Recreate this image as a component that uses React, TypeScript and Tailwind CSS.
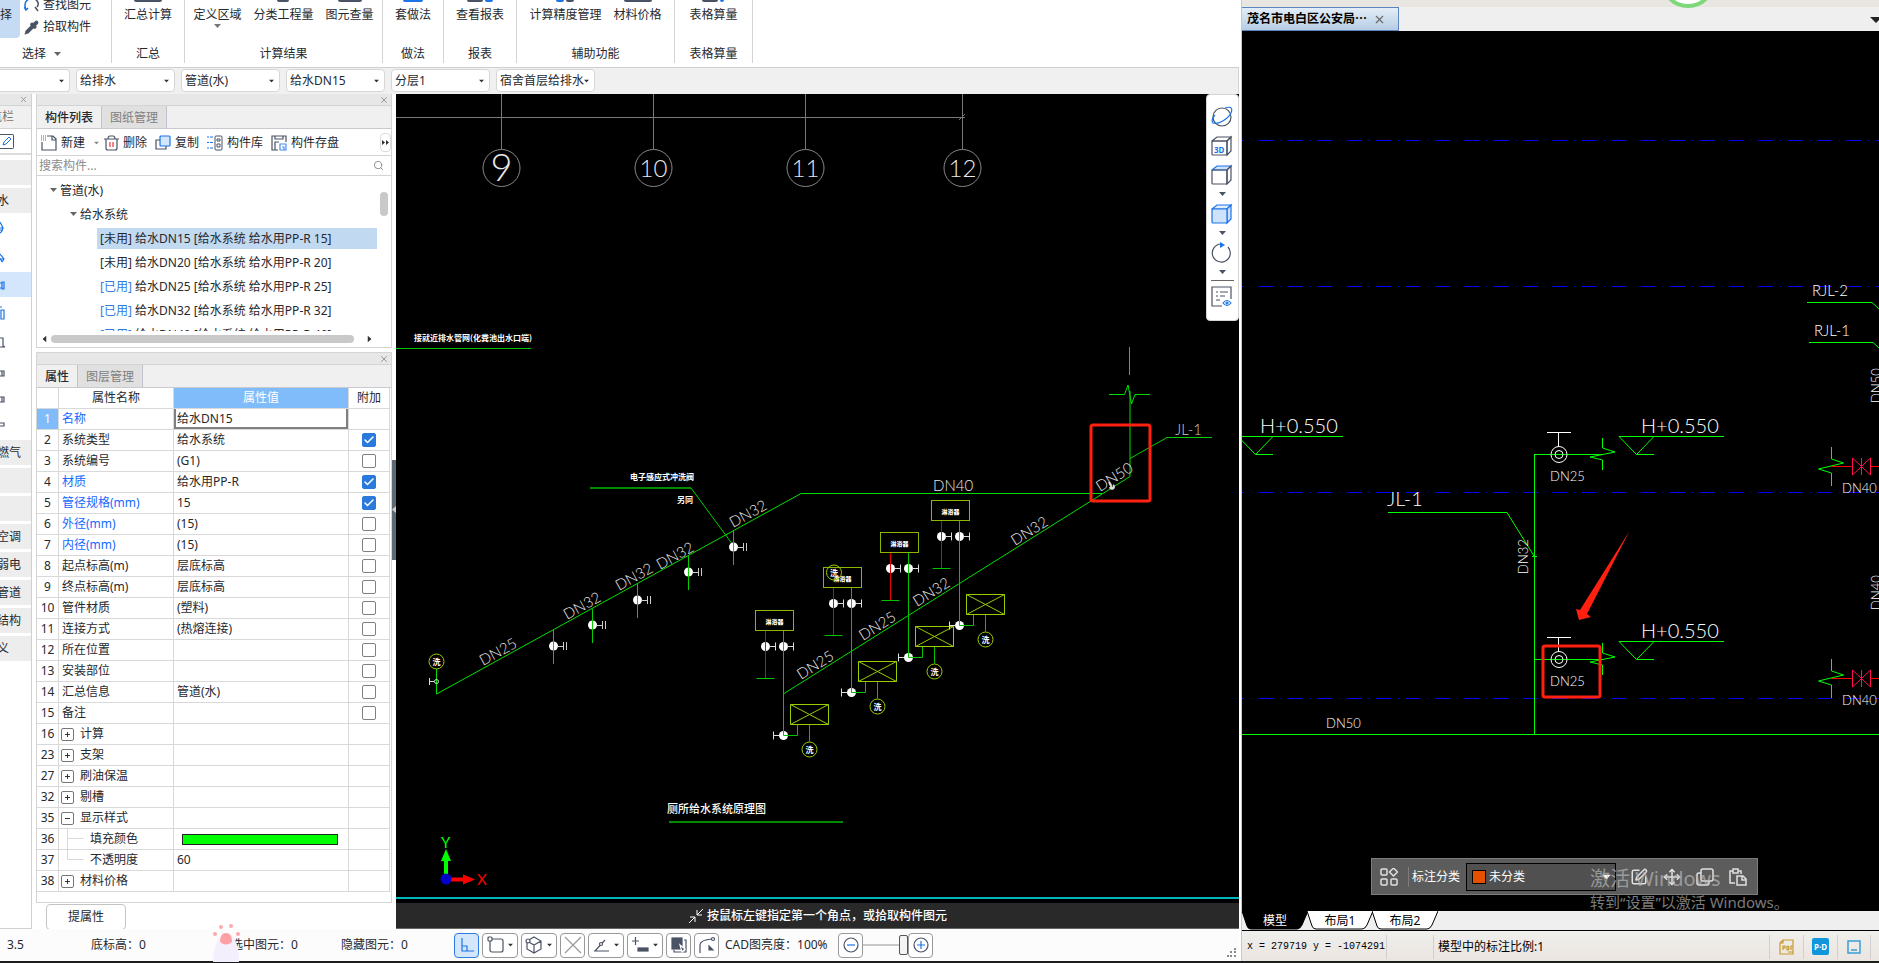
import type { ReactNode } from 'react';
import { Check, Move, Pipette, Search, SquarePen, X } from 'lucide-react';

const RIBBON_GROUPS = [
  { title: '汇总', width: 'w-[73px]', tools: [{ label: '汇总计算', icon: 'w-7 bg-[#4a5365]' }] },
  {
    title: '计算结果',
    width: 'w-[198px]',
    tools: [
      { label: '定义区域', icon: 'w-0', menu: true },
      { label: '分类工程量', icon: 'w-3 bg-[#4a5365]' },
      { label: '图元查量', icon: 'w-6 bg-[#4a5365]' },
    ],
  },
  { title: '做法', width: 'w-[61px]', tools: [{ label: '套做法', icon: 'w-5 bg-[#1a73e8]' }] },
  {
    title: '报表',
    width: 'w-[73px]',
    tools: [{ label: '查看报表', icon: 'w-4 bg-[#4a5365]', accent: 'w-2 bg-[#1a73e8]' }],
  },
  {
    title: '辅助功能',
    width: 'w-[158px]',
    tools: [
      { label: '计算精度管理', icon: 'w-2 bg-[#1a73e8]', accent: 'w-2 bg-[#4a5365]' },
      { label: '材料价格', icon: 'w-7 bg-[#4a5365]' },
    ],
  },
  {
    title: '表格算量',
    width: 'w-[78px]',
    tools: [{ label: '表格算量', icon: 'w-4 bg-[#4a5365]', accent: 'w-1 bg-[#1a73e8]' }],
  },
];

const FILTERS = [
  { name: '楼层', value: '' },
  { name: '专业', value: '给排水' },
  { name: '构件类型', value: '管道(水)' },
  { name: '构件', value: '给水DN15' },
  { name: '分层', value: '分层1' },
  { name: '图纸', value: '宿舍首层给排水' },
];

const COMPONENTS = [
  { used: false, dn: '15' },
  { used: false, dn: '20' },
  { used: true, dn: '25' },
  { used: true, dn: '32' },
  { used: true, dn: '40' },
];

type Property = {
  id: number;
  name: string;
  value?: string;
  key?: boolean;
  checked?: boolean;
  fold?: 'open' | 'closed';
  child?: 'mid' | 'last';
};

const PROPERTIES: Property[] = [
  { id: 1, name: '名称', value: '给水DN15', key: true },
  { id: 2, name: '系统类型', value: '给水系统', checked: true },
  { id: 3, name: '系统编号', value: '(G1)', checked: false },
  { id: 4, name: '材质', value: '给水用PP-R', key: true, checked: true },
  { id: 5, name: '管径规格(mm)', value: '15', key: true, checked: true },
  { id: 6, name: '外径(mm)', value: '(15)', key: true, checked: false },
  { id: 7, name: '内径(mm)', value: '(15)', key: true, checked: false },
  { id: 8, name: '起点标高(m)', value: '层底标高', checked: false },
  { id: 9, name: '终点标高(m)', value: '层底标高', checked: false },
  { id: 10, name: '管件材质', value: '(塑料)', checked: false },
  { id: 11, name: '连接方式', value: '(热熔连接)', checked: false },
  { id: 12, name: '所在位置', checked: false },
  { id: 13, name: '安装部位', checked: false },
  { id: 14, name: '汇总信息', value: '管道(水)', checked: false },
  { id: 15, name: '备注', checked: false },
  { id: 16, name: '计算', fold: 'closed' },
  { id: 23, name: '支架', fold: 'closed' },
  { id: 27, name: '刷油保温', fold: 'closed' },
  { id: 32, name: '剔槽', fold: 'closed' },
  { id: 35, name: '显示样式', fold: 'open' },
  { id: 36, name: '填充颜色', child: 'mid' },
  { id: 37, name: '不透明度', value: '60', child: 'last' },
  { id: 38, name: '材料价格', fold: 'closed' },
];

const THIN = 'Lato, "Liberation Sans", sans-serif';
const CJK = '"Noto Sans CJK SC", sans-serif';

function Caret({ className = '' }: { className?: string }) {
  return (
    <svg className={`shrink-0 ${className}`} width="7" height="4" viewBox="0 0 7 4" fill="currentColor">
      <path d="M0 0h7L3.500 4z" />
    </svg>
  );
}

/* ---------- Ribbon and filter bar ---------- */

function Ribbon() {
  return (
    <div className="flex h-[68px] shrink-0 border-b border-[#cfcfcf] bg-white">
      <div className="flex h-[63px] w-28 shrink-0 flex-col justify-between border-r border-[#d4d4d4]">
        <div className="flex h-[38px] overflow-hidden">
          <button className="flex h-full w-5 shrink-0 justify-start overflow-hidden rounded-br-sm bg-[#c5dbf3] pt-[6px] leading-[18px]">
            择
          </button>
          <div className="flex flex-col justify-end pl-1">
            <button className="flex items-center gap-1 leading-[22px]">
              <svg width="15" height="15" viewBox="0 0 15 15" fill="none" stroke="#4a5365" strokeWidth="1.500">
                <path d="M5 1C1 3 0 7 2 12M0 9l2 3 2-2" stroke="#1a73e8" />
                <path d="M8 1a5 5 0 0 1 5 8M11 9l3 4" />
              </svg>
              查找图元
            </button>
            <button className="flex items-center gap-1 leading-[22px]">
              <Pipette size={15} fill="#4a5365" color="#4a5365" />
              拾取构件
            </button>
          </div>
        </div>
        <button className="flex items-center gap-2 pl-[22px] leading-[18px]">
          选择 <Caret className="text-[#666]" />
        </button>
      </div>
      {RIBBON_GROUPS.map((group) => (
        <div
          key={group.title}
          className={`flex h-[63px] shrink-0 flex-col justify-between border-r border-[#d4d4d4] ${group.width}`}
        >
          <div className="flex justify-center gap-3">
            {group.tools.map((tool) => (
              <button key={tool.label} className="flex flex-col items-center whitespace-nowrap">
                <span className="flex h-[6px] gap-[2px]">
                  <span className={`h-[2px] rounded-b-sm ${tool.icon}`} />
                  {tool.accent && <span className={`h-[2px] rounded-b-sm ${tool.accent}`} />}
                </span>
                <span className="leading-[18px]">{tool.label}</span>
                {tool.menu && <Caret className="text-[#777]" />}
              </button>
            ))}
          </div>
          <div className="text-center leading-[18px]">{group.title}</div>
        </div>
      ))}
    </div>
  );
}

function FilterBar() {
  return (
    <div className="flex h-[26px] shrink-0 gap-[6px] overflow-hidden border-r border-[#d4d4d4] bg-[#f0f0f0] pt-px">
      {FILTERS.map((filter, i) => (
        <div key={filter.name} className={`relative h-[23px] shrink-0 ${i === 0 ? 'w-[70px]' : 'w-[99px]'}`}>
          <select
            aria-label={filter.name}
            className={`h-full w-full appearance-none rounded border border-[#d6d6d6] bg-white pl-[3px] leading-5 ${i === 0 ? 'rounded-l-none border-l-0' : ''}`}
          >
            <option>{filter.value}</option>
          </select>
          <Caret className="pointer-events-none absolute top-[10px] right-[5px] scale-75 text-[#333]" />
        </div>
      ))}
    </div>
  );
}

/* ---------- Navigation strip ---------- */

function NavSection({ label = '', pad = 'pr-[10px]' }: { label?: string; pad?: string }) {
  return (
    <button className={`flex h-[25px] w-full shrink-0 items-center justify-end overflow-hidden bg-[#ededed] whitespace-nowrap ${pad}`}>
      {label}
    </button>
  );
}

function NavGlyph({ d, color = '#4a5365', height = 'h-6' }: { d: string; color?: string; height?: string }) {
  return (
    <button className={`flex w-full shrink-0 items-center ${height}`}>
      <svg width="8" height="14" viewBox="0 0 8 14" fill="none" stroke={color} strokeWidth="1.200">
        <path d={d} />
      </svg>
    </button>
  );
}

function NavStrip() {
  return (
    <nav className="flex w-8 shrink-0 flex-col overflow-hidden border-r border-b border-[#d0d0d0] bg-white">
      <div className="flex h-3 shrink-0 items-center justify-end border-b border-[#d4d4d4] bg-[#e7e7e7] pr-[3px]">
        <X size={9} className="text-[#888]" />
      </div>
      <div className="flex h-[23px] shrink-0 items-center justify-end overflow-hidden border-b border-[#d4d4d4] bg-[#f0f0f0] pr-[17px] whitespace-nowrap text-[#777]">
        导航栏
      </div>
      <div className="flex h-[26px] shrink-0 items-center border-b-2 border-[#dcdcdc]">
        <span className="flex h-[15px] w-[14px] items-center justify-center rounded-r-xs border border-l-0 border-[#4a5365]">
          <svg width="10" height="10" viewBox="0 0 10 10" fill="none" stroke="#1a73e8">
            <path d="M1 9l1-3 5-5 2 2-5 5z" />
          </svg>
        </span>
      </div>
      <div className="mt-[5px] flex flex-col gap-[3px]">
        <NavSection />
        <NavSection label="水" pad="pr-[22px]" />
      </div>
      <NavGlyph d="M0 1l3 6H0M3 7q-1 4-3 5M0 9h3" color="#1a73e8" height="h-[30px]" />
      <NavGlyph d="M0 3l4 5-2 3M1 8l3 0M0 7l2 4" color="#1a73e8" height="h-[29px]" />
      <div className="bg-[#d4e6fb]">
        <NavGlyph d="M0 5h2v5H0M2 4h2v7H2z" color="#1a73e8" height="h-[25px]" />
      </div>
      <NavGlyph d="M0 1h2M1 4h3v9H1z" color="#1a73e8" height="h-8" />
      <NavGlyph d="M0 2h3v8l2 1H0" height="h-7" />
      <NavGlyph d="M0 5h4v5H0M2 5v5" height="h-8" />
      <NavGlyph d="M0 5h4v5H0M2 5v5" height="h-5" />
      <NavGlyph d="M0 5h4v3H0" height="h-[31px]" />
      <div className="flex flex-col gap-[3px]">
        <NavSection label="燃气" />
        <NavSection />
        <NavSection />
        <NavSection label="空调" />
        <NavSection label="弱电" />
        <NavSection label="管道" />
        <NavSection label="结构" />
        <NavSection label="自定义" pad="pr-[22px]" />
      </div>
    </nav>
  );
}

/* ---------- Docked panels ---------- */

function PanelTabs({ tabs }: { tabs: string[] }) {
  return (
    <>
      <div className="flex h-3 shrink-0 items-center justify-end border-b border-[#d4d4d4] bg-[#e7e7e7] pr-[2px]">
        <button aria-label="关闭">
          <X size={10} className="text-[#888]" />
        </button>
      </div>
      <div className="flex h-[23px] shrink-0 border-b border-[#c8cacf] bg-[#f0f0f0]">
        {tabs.map((tab, i) => (
          <button
            key={tab}
            className={`border-r border-[#c0c4cc] px-2 pt-px ${i === 0 ? 'font-medium' : 'bg-[#e0e0e0] text-[#808080]'}`}
          >
            {tab}
          </button>
        ))}
      </div>
    </>
  );
}

function ComponentPanel() {
  return (
    <section className="flex h-[254px] shrink-0 flex-col border border-t-0 border-[#d4d4d4] bg-white">
      <PanelTabs tabs={['构件列表', '图纸管理']} />
      <div className="flex h-[27px] shrink-0 items-center border-b border-[#d4d4d4] pt-px pl-1 whitespace-nowrap">
        <button className="flex items-center gap-1">
          <svg width="16" height="16" viewBox="0 0 16 16" fill="none" stroke="#4a5365" strokeWidth="1.200">
            <path d="M6 1h6l3 3v11H1V7M11 1v4h4" />
            <path d="M0 1h5M0 3h5M0 5h5" stroke="#1a73e8" strokeDasharray="1 1" />
          </svg>
          新建
          <Caret className="ml-1 scale-75 text-[#888]" />
        </button>
        <button className="ml-1 flex items-center gap-1">
          <svg width="15" height="16" viewBox="0 0 15 16" fill="none" stroke="#4a5365" strokeWidth="1.200">
            <path d="M0 4h15M2 4v9q0 2 2 2h7q2 0 2-2V4M4 4q0-3 2-3h3q2 0 2 3" />
            <path d="M6 7v5M9 7v5" stroke="#e53935" />
          </svg>
          删除
        </button>
        <button className="ml-2 flex items-center gap-1">
          <svg width="16" height="16" viewBox="0 0 16 16" strokeWidth="1.200">
            <path d="M5 5H1v9h10v-3" fill="none" stroke="#4a5365" />
            <rect x="5" y="1" width="10" height="10" rx="1" fill="#d4e6fb" stroke="#1a73e8" />
          </svg>
          复制
        </button>
        <button className="ml-2 flex items-center gap-1">
          <svg width="16" height="16" viewBox="0 0 16 16" fill="none" stroke="#4a5365">
            <rect x="8" y="1" width="7" height="14" rx="1" />
            <path d="M10 4h3v2h-3zM10 9h3v3h-3z" />
            <path d="M0 2h2M0 7.500h2M0 13h2M3 2h3M3 7.500h3M3 13h3" stroke="#1a73e8" />
          </svg>
          构件库
        </button>
        <button className="ml-2 flex items-center gap-1">
          <svg width="16" height="16" viewBox="0 0 16 16" fill="none" stroke="#4a5365" strokeWidth="1.200">
            <path d="M7 15H1V1h14v6M4 15V7h4M4 1v3h8V1" />
            <path d="M9 9h6v6H9zM11 12h2v3" stroke="#4a8df0" />
          </svg>
          构件存盘
        </button>
        <button aria-label="更多" className="ml-auto flex h-[19px] w-[11px] items-center justify-center rounded-sm border border-[#dcdcdc]">
          <svg width="7" height="5" viewBox="0 0 7 5" fill="#333">
            <path d="M0 0l3 2.500L0 5zM4 0l3 2.500L4 5z" />
          </svg>
        </button>
      </div>
      <label className="flex h-5 shrink-0 items-center border-b border-[#d4d4d4] pr-[7px] pl-[2px]">
        <input
          type="text"
          placeholder="搜索构件..."
          className="min-w-0 flex-1 bg-transparent pt-px leading-[18px] outline-none placeholder:text-[#8c8c8c]"
        />
        <Search size={11} className="text-[#888]" />
      </label>
      <div className="flex min-h-0 flex-1 justify-between overflow-hidden pt-[2px] pr-[3px] whitespace-nowrap">
        <ul className="min-w-0 flex-1 leading-[21px]">
          <li className="flex h-6 items-center gap-[3px] pl-[13px]">
            <Caret className="text-[#666]" /> 管道(水)
          </li>
          <li className="flex h-6 items-center gap-[3px] pl-[33px]">
            <Caret className="text-[#666]" /> 给水系统
          </li>
          {COMPONENTS.map((item, i) => (
            <li key={item.dn} className="h-6 pt-[2px] pb-px pl-[60px]">
              <div className={`w-[280px] pl-[3px] ${i === 0 ? 'bg-[#c2d9f2]' : ''}`}>
                <span className={item.used ? 'text-[#2e7be6]' : ''}>[{item.used ? '已用' : '未用'}]</span>{' '}
                给水DN{item.dn} [给水系统 给水用PP-R {item.dn}]
              </div>
            </li>
          ))}
        </ul>
        <div className="mt-[14px] h-6 w-2 rounded bg-[#c9c9c9]" />
      </div>
      <div className="flex h-4 shrink-0 items-center pr-[18px] pl-1 text-[#333]">
        <Caret className="rotate-90" />
        <div className="mx-[3px] h-2 w-[303px] rounded bg-[#c9c9c9]" />
        <Caret className="ml-auto -rotate-90" />
      </div>
    </section>
  );
}

function NameCell({ row }: { row: Property }) {
  if (row.fold) {
    return (
      <button className="flex items-center gap-[6px] pl-[2px]">
        <span className="flex h-[13px] w-[13px] items-center justify-center rounded-xs border border-[#777]">
          <svg width="7" height="7" viewBox="0 0 7 7" stroke="#333">
            <path d={row.fold === 'closed' ? 'M1 3.500h5M3.500 1v5' : 'M1 3.500h5'} />
          </svg>
        </span>
        {row.name}
      </button>
    );
  }
  if (row.child) {
    return (
      <div className="flex items-center">
        <svg width="31" height="20" viewBox="0 0 31 20" fill="none" stroke="#d9d9d9">
          <path d={row.child === 'mid' ? 'M8.500 0v20M8.500 9.500h16' : 'M8.500 0v9.500h16'} />
        </svg>
        {row.name}
      </div>
    );
  }
  return <div className={`pl-[3px] ${row.key ? 'text-[#1668ff]' : ''}`}>{row.name}</div>;
}

function ValueCell({ row }: { row: Property }) {
  if (row.id === 1) {
    return (
      <input
        aria-label={row.name}
        defaultValue={row.value}
        className="block h-5 w-full border-2 border-t-0 border-[#808080] pl-px leading-[18px] outline-none"
      />
    );
  }
  if (row.id === 36) {
    return <div className="mr-[10px] ml-2 h-[11px] border border-[#222] bg-[#00ff00]" />;
  }
  return <div className="pl-[3px]">{row.value}</div>;
}

function PropertyPanel() {
  return (
    <section className="mt-1 flex min-h-0 flex-1 flex-col">
      <div className="border border-[#d4d4d4] bg-white pb-[10px]">
        <PanelTabs tabs={['属性', '图层管理']} />
        <table className="w-[353px] table-fixed border-separate border-spacing-0 whitespace-nowrap">
          <colgroup>
            <col className="w-[22px]" />
            <col className="w-[115px]" />
            <col />
            <col className="w-[41px]" />
          </colgroup>
          <thead>
            <tr className="h-[21px] *:border-r *:border-b *:border-[#d9d9d9] *:p-0 *:leading-5 *:font-normal">
              <th />
              <th>属性名称</th>
              <th className="bg-[#80bbfa] text-white">属性值</th>
              <th>附加</th>
            </tr>
          </thead>
          <tbody>
            {PROPERTIES.map((row) => (
              <tr key={row.id} className="h-[21px] *:border-r *:border-b *:border-[#d9d9d9] *:p-0 *:leading-5">
                <td className={`text-center ${row.id === 1 ? 'bg-[#80bbfa] text-white' : ''}`}>{row.id}</td>
                <td>
                  <NameCell row={row} />
                </td>
                <td>
                  <ValueCell row={row} />
                </td>
                <td>
                  {row.checked !== undefined && (
                    <div className="relative mx-auto h-[14px] w-[14px]">
                      <input
                        type="checkbox"
                        aria-label={`${row.name} 附加`}
                        defaultChecked={row.checked}
                        className="peer block h-full w-full appearance-none rounded-xs border border-[#808080] bg-white checked:border-[#2a7ade] checked:bg-[#2a7ade]"
                      />
                      <Check
                        size={12}
                        strokeWidth={3}
                        className="pointer-events-none absolute inset-px text-white opacity-0 peer-checked:opacity-100"
                      />
                    </div>
                  )}
                </td>
              </tr>
            ))}
          </tbody>
        </table>
      </div>
      <div className="flex pt-px pl-[10px]">
        <button className="h-[26px] w-20 rounded border border-[#c4c4c4] bg-white">提属性</button>
      </div>
    </section>
  );
}

/* ---------- Model drawing ---------- */

function Label({
  x,
  y,
  size = 15,
  angle = 0,
  font = THIN,
  weight = 300,
  fill = '#e8e8e8',
  children,
}: {
  x: number;
  y: number;
  size?: number;
  angle?: number;
  font?: string;
  weight?: number;
  fill?: string;
  children: ReactNode;
}) {
  return (
    <text transform={`translate(${x} ${y}) rotate(${angle})`} fontSize={size} fontFamily={font} fontWeight={weight} fill={fill}>
      {children}
    </text>
  );
}

const AXES = [
  { x: 501, label: '9', size: 38 },
  { x: 653, label: '10', size: 24 },
  { x: 805, label: '11', size: 24 },
  { x: 962, label: '12', size: 24 },
];

const FLUSH_VALVES = [
  { x: 553, y: 646 },
  { x: 592, y: 625 },
  { x: 637, y: 600 },
  { x: 688, y: 572 },
  { x: 733, y: 547 },
];

const SHOWERS = [
  { x: 755.5, y: 610.5 },
  { x: 823.5, y: 567.5 },
  { x: 880.5, y: 532.5 },
  { x: 931.5, y: 500.5 },
];

function FlushValve({ x, y }: { x: number; y: number }) {
  return (
    <g transform={`translate(${x + 0.5} ${y})`} fill="none">
      <circle r="4.500" fill="#fff" />
      <path d="M4 0.500h6M10 -4v8M13 -4v8" stroke="#ccc" />
      <path d="M0 -16v34" stroke="#00d000" />
    </g>
  );
}

function Drain({ x, y }: { x: number; y: number }) {
  return (
    <g transform={`translate(${x} ${y})`}>
      <circle r="7.500" fill="none" stroke="#9acd00" />
      <text y="3" textAnchor="middle" fontSize="8" fontWeight="700" fontFamily={CJK} fill="#fff">
        洗
      </text>
    </g>
  );
}

function Shower({ x, y }: { x: number; y: number }) {
  return (
    <g transform={`translate(${x} ${y})`} fill="none">
      <circle cx="10" cy="36" r="4.500" fill="#fff" />
      <circle cx="28" cy="36" r="4.500" fill="#fff" />
      <circle cx="28" cy="125" r="4.500" fill="#fff" />
      <path d="M14 36h6M20 32v8M32 36h6M38 32v8M24 125h-6M18 121v8" stroke="#ddd" />
      <path d="M10 20v48" stroke="#e00000" />
      <path d="M1 68h18M28 20v105h14v-11M54 114v17" stroke="#00c400" />
      <rect width="38" height="20" stroke="#8db600" />
      <path d="M35 94h38v20H35zl38 20M73 94l-38 20" stroke="#9acd00" />
      <text x="19" y="13" textAnchor="middle" fontSize="6" fontWeight="900" fontFamily={CJK} fill="#fff">
        淋浴器
      </text>
      <Drain x={54} y={139} />
    </g>
  );
}

function ModelDrawing() {
  return (
    <svg
      className="h-full w-full"
      viewBox="396 94 843 809"
      preserveAspectRatio="xMinYMin slice"
      fill="none"
      stroke="none"
    >
      <path d="M396 117.500H965M959 120l6-6" stroke="#777" />
      {AXES.map((axis) => (
        <g key={axis.label}>
          <path d={`M${axis.x + 0.5} 94v55`} stroke="#777" />
          <circle cx={axis.x + 0.5} cy="168" r="18.500" stroke="#888" />
          <text
            x={axis.x + 0.5}
            y={axis.size === 38 ? 181 : 177}
            textAnchor="middle"
            fontSize={axis.size}
            fontFamily={THIN}
            fontWeight="300"
            fill="#e8e8e8"
          >
            {axis.label}
          </text>
        </g>
      ))}

      <Label x={414} y={341} size={8} font={CJK} weight={700} fill="#fff">
        接就近排水管网(化粪池出水口端)
      </Label>
      <path d="M396 348.500H531" stroke="#00c400" />

      {/* Upper branch */}
      <path d="M436.500 669V694L801 493.500H1102" stroke="#00e000" />
      <path d="M590 488H691" stroke="#008c00" strokeWidth="2" />
      <path d="M691 488L733 545" stroke="#00d000" />
      <Label x={630} y={480} size={8} font={CJK} weight={700} fill="#fff">
        电子感应式冲洗阀
      </Label>
      <Label x={677} y={503} size={8} font={CJK} weight={700} fill="#fff">
        另同
      </Label>
      {FLUSH_VALVES.map((valve) => (
        <FlushValve key={valve.x} {...valve} />
      ))}
      <Drain x={436.5} y={661.5} />
      <circle cx="436.500" cy="681.500" r="2" stroke="#ddd" />
      <path d="M434 681.500h-4M429.500 678v7" stroke="#ddd" />
      <Label x={483} y={666} angle={-29}>DN25</Label>
      <Label x={567} y={620} angle={-29}>DN32</Label>
      <Label x={619} y={591} angle={-29}>DN32</Label>
      <Label x={660} y={570} angle={-29}>DN32</Label>
      <Label x={733} y={528} angle={-29}>DN32</Label>

      {/* Shower branch */}
      <path d="M784 693.500L1130 476.500V391M1129.500 375V347" stroke="#00e000" />
      <path d="M1109 394.500h15.500l3.500-9.500 3.500 19 3.500-9.500h15" stroke="#00e000" />
      {SHOWERS.map((shower) => (
        <Shower key={shower.x} {...shower} />
      ))}
      <Drain x={834} y={572.5} />
      <Label x={933} y={491}>DN40</Label>
      <Label x={1015} y={546} angle={-32}>DN32</Label>
      <Label x={917} y={607} angle={-32}>DN32</Label>
      <Label x={863} y={641} angle={-32}>DN25</Label>
      <Label x={801} y={680} angle={-32}>DN25</Label>
      <Label x={1100} y={492} angle={-32}>DN50</Label>
      <path d="M1109 482l3 6M1110 487a2 2 0 1 0 3-2" stroke="#ddd" strokeWidth="2" />
      <path d="M1130 458.500L1167 437.500H1212" stroke="#00d000" />
      <Label x={1175} y={435} fill="#ccc">JL-1</Label>
      <rect x="1091" y="425" width="59" height="76" rx="2" stroke="#ff2010" strokeWidth="3" />

      <Label x={667} y={813} size={11} font={CJK} weight={500} fill="#fff">
        厕所给水系统原理图
      </Label>
      <path d="M669 822H843" stroke="#008c00" strokeWidth="2" />

      {/* Coordinate axes */}
      <path d="M446 875V860" stroke="#0f0" strokeWidth="4" />
      <path d="M446 849l5 12h-10z" fill="#0f0" />
      <path d="M450 879.500H465" stroke="#f00" strokeWidth="4" />
      <path d="M475 879.500l-12-5v10z" fill="#f00" />
      <circle cx="446" cy="879" r="5.500" fill="#0000c8" />
      <Label x={441} y={848} weight={400} fill="#0f0">Y</Label>
      <Label x={477} y={885} weight={400} fill="#f00">X</Label>
      <path d="M396 898H1239" stroke="#00b4bc" strokeWidth="2" />
    </svg>
  );
}

function CubeIcon({ top = 'none', front = 'none', stroke = '#4a5365' }: { top?: string; front?: string; stroke?: string }) {
  return (
    <svg width="22" height="22" viewBox="0 0 22 22" strokeWidth="1.200">
      <path d="M1 6l5-4h14l-4 4z" fill={top} stroke={top === 'none' ? stroke : '#1a73e8'} />
      <path d="M16 6l4-4v14l-4 4z" fill={front} stroke={stroke} />
      <rect x="1" y="6" width="15" height="14" rx="1" fill={front} stroke={stroke} />
    </svg>
  );
}

function ViewToolbar() {
  return (
    <div className="absolute top-0 right-0 flex h-[227px] w-[33px] flex-col items-center rounded-sm border border-[#d4d4d4] bg-white pt-[11px] pr-px text-[#4a5365]">
      <button aria-label="动态观察">
        <svg width="22" height="22" viewBox="0 0 22 22" fill="none" strokeWidth="1.200">
          <circle cx="11" cy="11" r="9" stroke="#4a5365" />
          <path d="M14 2c6-2 8 0 6 5C17 13 7 19 2 17c-2-2 0-6 2-8" stroke="#1a73e8" />
        </svg>
      </button>
      <button aria-label="三维" className="relative mt-[7px]">
        <CubeIcon />
        <span className="absolute bottom-[3px] left-[3px] text-[8px] leading-[8px] font-bold text-[#1a73e8]">3D</span>
      </button>
      <button aria-label="俯视" className="mt-[7px] flex flex-col items-center gap-[6px]">
        <CubeIcon top="#cfe2fb" />
        <Caret />
      </button>
      <button aria-label="实体" className="mt-[7px] flex flex-col items-center gap-[6px]">
        <CubeIcon top="#e0edfd" front="#cfe2fb" stroke="#1a73e8" />
        <Caret />
      </button>
      <button aria-label="旋转" className="mt-[7px] flex flex-col items-center gap-[6px]">
        <svg width="22" height="22" viewBox="0 0 22 22" fill="none">
          <path d="M17 5a9 9 0 1 1-7-3" stroke="#4a5365" strokeWidth="1.200" />
          <path d="M9 0l5 3-5 3z" fill="#1a73e8" />
        </svg>
        <Caret />
      </button>
      <div className="mt-[6px] h-px w-[23px] shrink-0 bg-[#666]" />
      <button aria-label="图元显示" className="mt-[5px]">
        <svg width="22" height="22" viewBox="0 0 22 22" fill="none" stroke="#4a5365" strokeWidth="1.200">
          <path d="M11 20H1V1h19v12M5 6h2M9 6h8M5 10h2M9 10h5M5 14h4" />
          <path d="M12 17q4-5 8 0-4 5-8 0z" stroke="#1a73e8" />
          <circle cx="16" cy="17" r="1" stroke="#1a73e8" />
        </svg>
      </button>
    </div>
  );
}

function ModelView() {
  return (
    <main className="flex min-w-0 flex-1 flex-col bg-black">
      <div className="relative min-h-0 flex-1 overflow-hidden">
        <ModelDrawing />
        <ViewToolbar />
      </div>
      <div className="flex h-[26px] shrink-0 items-center justify-center gap-1 border-b border-[#666] bg-[#292929] pt-px font-medium text-white">
        <svg width="15" height="15" viewBox="0 0 15 15" fill="none" stroke="#fff">
          <path d="M1 14l6-6M2 8h5v5M15 0L9 6M9 1v5h5" />
        </svg>
        按鼠标左键指定第一个角点，或拾取构件图元
      </div>
    </main>
  );
}

/* ---------- Left status bar ---------- */

function SnapButton({ menu, active, label, children }: { menu?: boolean; active?: boolean; label: string; children: ReactNode }) {
  return (
    <button
      aria-label={label}
      className={`flex h-[25px] shrink-0 items-center rounded-sm border ${menu ? 'w-9 justify-between px-[3px]' : 'w-[25px] justify-center'} ${active ? 'border-[#2e7be6] bg-[#d4e6fb]' : 'border-[#999] bg-white'}`}
    >
      <svg width="18" height="18" viewBox="0 0 18 18" fill="none" stroke="#4a5365" strokeWidth="1.200">
        {children}
      </svg>
      {menu && <Caret className="scale-75 text-[#333]" />}
    </button>
  );
}

function ModelStatusBar() {
  return (
    <footer className="flex h-8 shrink-0 items-center bg-[#fcfcfc] whitespace-nowrap">
      <span className="w-[91px] pl-[7px]">3.5</span>
      <span className="w-[140px]">底标高：0</span>
      <span className="relative w-[110px]">
        选中图元：0
        <svg className="absolute -top-[14px] -left-[19px]" width="28" height="40" viewBox="0 0 28 40">
          <path d="M1 40Q2 20 10 13h9q8 7 8 27z" fill="#f4effc" />
          <path d="M8 20q0-9 6-9t6 9q-6 5-12 0z" fill="#ffa0a4" />
          <g fill="#ffa8ac">
            <circle cx="3" cy="12" r="2" />
            <circle cx="9" cy="5" r="2" />
            <circle cx="19" cy="4" r="2" />
            <circle cx="26" cy="12" r="2" />
          </g>
        </svg>
      </span>
      <span className="w-[113px]">隐藏图元：0</span>
      <div className="flex items-center gap-[3px]">
        <SnapButton label="正交" active>
          <path d="M4 2v13h12M4 10h5v5" stroke="#1a73e8" />
        </SnapButton>
        <SnapButton label="选择框" menu>
          <rect x="4" y="3" width="13" height="13" rx="2" />
          <rect x="2" y="1" width="4" height="4" rx="1" fill="#fff" />
        </SnapButton>
        <SnapButton label="体捕捉" menu>
          <path d="M9 1l7 4v8l-7 4-7-4V5zM2 5l7 4 7-4M9 9v8" />
          <circle cx="3" cy="5" r="2" fill="#fff" />
        </SnapButton>
        <SnapButton label="交点">
          <path d="M1 1l16 16M17 1L1 17" stroke="#999" />
        </SnapButton>
        <SnapButton label="角度" menu>
          <path d="M2 15h15M3 15L13 4" />
          <circle cx="9" cy="8" r="1.500" fill="#fff" />
        </SnapButton>
        <SnapButton label="偏移" menu>
          <path d="M1 5h7M4.500 1v8" />
          <rect x="7" y="12" width="10" height="3" fill="#4a5365" />
        </SnapButton>
        <SnapButton label="窗选">
          <rect x="2" y="2" width="10" height="11" fill="#4a5365" />
          <path d="M14 4h2v12H4v-2" />
          <path d="M10 9l5 4-3 3z" fill="#4a5365" stroke="#fff" />
        </SnapButton>
        <SnapButton label="折线">
          <path d="M2 17V9q0-5 12-6" />
          <circle cx="15" cy="3" r="1.500" />
          <path d="M11 10l4 4h-4z" fill="#4a5365" />
        </SnapButton>
      </div>
      <label htmlFor="brightness" className="w-[119px] pl-[6px]">
        CAD图亮度：100%
      </label>
      <div className="flex items-center">
        <SnapButton label="调暗">
          <circle cx="9" cy="9" r="7" />
          <path d="M5 9h8" stroke="#1a73e8" />
        </SnapButton>
        <input
          id="brightness"
          type="range"
          defaultValue={100}
          className="h-[21px] w-[45px] appearance-none bg-transparent [&::-webkit-slider-runnable-track]:h-[2px] [&::-webkit-slider-runnable-track]:bg-[#c8c8c8] [&::-webkit-slider-thumb]:-mt-[9px] [&::-webkit-slider-thumb]:h-5 [&::-webkit-slider-thumb]:w-[9px] [&::-webkit-slider-thumb]:appearance-none [&::-webkit-slider-thumb]:rounded-xs [&::-webkit-slider-thumb]:border [&::-webkit-slider-thumb]:border-[#555] [&::-webkit-slider-thumb]:bg-[#f4f4f4]"
        />
        <SnapButton label="调亮">
          <circle cx="9" cy="9" r="7" />
          <path d="M5 9h8M9 5v8" stroke="#1a73e8" />
        </SnapButton>
      </div>
      <svg className="mt-auto mr-[3px] mb-1 ml-auto" width="9" height="9" viewBox="0 0 9 9" fill="#888">
        <path d="M7 0h2v2H7zM7 3h2v2H7zM7 7h2v2H7zM3 3h2v2H3zM3 7h2v2H3zM0 7h2v2H0z" />
      </svg>
    </footer>
  );
}

function ModelWindow() {
  return (
    <div className="flex min-w-0 flex-col border-r border-[#c8c8c8] bg-white pr-[2px]">
      <Ribbon />
      <FilterBar />
      <div className="flex min-h-0 flex-1">
        <NavStrip />
        <aside className="ml-1 flex w-[356px] shrink-0 flex-col">
          <ComponentPanel />
          <PropertyPanel />
        </aside>
        <div className="flex w-1 shrink-0 items-center pb-1">
          <button aria-label="折叠" className="flex h-[100px] w-full items-center bg-[#5f6975]">
            <svg width="4" height="7" viewBox="0 0 4 7" fill="#ccc">
              <path d="M4 0v7L0 3.500z" />
            </svg>
          </button>
        </div>
        <ModelView />
      </div>
      <ModelStatusBar />
    </div>
  );
}

/* ---------- Drawing viewer ---------- */

function LevelMark({ x, y, cut }: { x: number; y: number; cut?: boolean }) {
  return (
    <g transform={`translate(${x} ${y})`}>
      <path d={`M${cut ? -1 : 0} 0.500H105M0 0.500L17.500 18.500L35 0.500M17.500 18.500H35`} stroke="#0f0" />
      <Label x={22} y={-3} size={20} fill="#fff">H+0.550</Label>
    </g>
  );
}

function AngleValve({ y }: { y: number }) {
  return (
    <g transform={`translate(0 ${y})`}>
      <path d="M1534.500 0.500H1602" stroke="#0f0" />
      <path d="M1602.500 -16v10l12.500 4-25 5 12.500 3v10" stroke="#0f0" />
      <circle cx="1559" cy="0.500" r="8" stroke="#fff" />
      <circle cx="1559" cy="0.500" r="4" stroke="#fff" />
      <path d="M1547 -21.500h24M1558.500 -21.500v14" stroke="#fff" />
      <Label x={1550} y={27} size={13} fill="#fff">DN25</Label>
      <LevelMark x={1619} y={-18} />
    </g>
  );
}

function GateValve({ y }: { y: number }) {
  return (
    <g transform={`translate(0 ${y})`}>
      <path d="M1831.500 -19v12l12 4-25 6 13 4v13" stroke="#0f0" />
      <path d="M1831 0.500h21M1871 0.500h8" stroke="#f00" />
      <path d="M1852.500 -8v17l18-17v17zM1861.500 -8v17" stroke="#ff1050" />
      <Label x={1842} y={27} size={13} fill="#fff">DN40</Label>
    </g>
  );
}

function SystemDrawing() {
  return (
    <svg className="h-full w-full" viewBox="1242 31 637 880" preserveAspectRatio="xMinYMin slice" fill="none">
      <g stroke="#0000ff" strokeWidth="1" strokeDasharray="15 7 1 6.400">
        <path d="M1229 140.500H1879" />
        <path d="M1229 286.500H1879" />
        <path d="M1229 492.500H1879" />
        <path d="M1229 698.500H1879" />
      </g>
      <LevelMark x={1238} y={436} cut />
      <AngleValve y={454} />
      <AngleValve y={659} />
      <path d="M1534.500 454V734M1242 734.500H1879" stroke="#0f0" />
      <path d="M1388 512.500H1507L1534 556" stroke="#0f0" />
      <path d="M1532 556.500h5M1534.500 554v5" stroke="#0f0" />
      <Label x={1387} y={506} size={20} fill="#fff">JL-1</Label>
      <Label x={1528} y={574} size={13} angle={-90} fill="#fff">DN32</Label>
      <Label x={1326} y={728} size={13} fill="#fff">DN50</Label>

      <path d="M1807 302.500H1872L1879 309M1809 342.500H1873L1879 348" stroke="#0f0" />
      <Label x={1812} y={296} fill="#fff">RJL-2</Label>
      <Label x={1814} y={336} fill="#fff">RJL-1</Label>
      <Label x={1881} y={403} size={13} angle={-90} fill="#fff">DN50</Label>
      <Label x={1881} y={610} size={13} angle={-90} fill="#fff">DN40</Label>
      <GateValve y={466} />
      <GateValve y={678} />

      <rect x="1543" y="646" width="57" height="51" rx="2" stroke="#ff2010" strokeWidth="3" />
      <path d="M1629.500 531L1587 614l4 3-12 3-3-11 4 1z" fill="#ff2010" />
    </svg>
  );
}

function MarkupToolbar() {
  return (
    <div className="absolute right-[121px] bottom-4 flex h-[37px] w-[387px] items-center border border-[#7d7d7d] bg-[#5c5c5c] pl-2 whitespace-nowrap text-[#e0e0e0]">
      <svg width="18" height="18" viewBox="0 0 18 18" fill="none" stroke="currentColor" strokeWidth="1.500">
        <rect x="1" y="1" width="6" height="6" rx="1" />
        <path d="M13.500 0l4 4-4 4-4-4z" />
        <rect x="1" y="11" width="6" height="6" rx="1" />
        <rect x="11" y="11" width="6" height="6" rx="1" />
      </svg>
      <span className="ml-[10px] h-5 w-px bg-[#7d7d7d]" />
      <label htmlFor="markup-type" className="ml-[3px] text-white">
        标注分类
      </label>
      <div className="ml-[6px] flex h-7 w-[150px] items-center border border-black bg-[#505050] pl-[5px]">
        <span className="h-[14px] w-[14px] shrink-0 border border-black bg-[#e65100]" />
        <select id="markup-type" className="min-w-0 flex-1 appearance-none pl-[3px] text-white">
          <option>未分类</option>
        </select>
        <Caret className="mr-[5px] scale-125 text-white" />
      </div>
      <div className="ml-[14px] flex gap-[15px]">
        <button aria-label="编辑">
          <SquarePen size={18} />
        </button>
        <button aria-label="移动">
          <Move size={18} />
        </button>
        <button aria-label="复制">
          <svg width="18" height="18" viewBox="0 0 18 18" fill="none" stroke="currentColor" strokeWidth="1.500">
            <rect x="5" y="1" width="12" height="12" rx="2" />
            <path d="M5 5H3q-2 0-2 2v8q0 2 2 2h8q2 0 2-2v-2" />
          </svg>
        </button>
        <button aria-label="粘贴">
          <svg width="18" height="18" viewBox="0 0 18 18" fill="none" stroke="currentColor" strokeWidth="1.500">
            <path d="M6 15H1V3h3M9 3h3v3M4 1h5v4H4z" />
            <path d="M8 8h6l3 3v6H8zM13 8v4h4" />
          </svg>
        </button>
      </div>
    </div>
  );
}

function LayoutTab({ label, active }: { label: string; active?: boolean }) {
  return (
    <button className={`relative -mr-px h-[19px] w-[66px] ${active ? 'text-white' : 'text-black'}`}>
      <svg className="absolute inset-0 h-full w-full" viewBox="0 0 66 19" preserveAspectRatio="none">
        <path d="M0 0l5 15q1 3 4 3h46q3 0 5-4L66 0z" fill={active ? '#000' : '#fff'} />
        <path d="M0 0l5 15q1 3 4 3h46q3 0 5-4L66 0" fill="none" stroke="#000" />
      </svg>
      <span className="relative leading-[18px]">{label}</span>
    </button>
  );
}

function ViewerWindow() {
  return (
    <div className="flex min-w-0 flex-col overflow-hidden bg-[#efefef]">
      <div className="relative flex h-[31px] shrink-0 items-end border-t-[7px] border-[#e9e5e1]">
        <button className="flex h-6 w-[157px] items-center gap-[6px] border border-l-0 border-[#5b86bd] bg-linear-to-b from-[#e3edf7] to-[#b6cce4] pl-[5px] font-bold whitespace-nowrap text-black">
          茂名市电白区公安局⋯
          <X size={13} className="text-[#666]" />
        </button>
        <svg className="mb-2 ml-auto" width="9" height="6" viewBox="0 0 9 6" fill="#222">
          <path d="M0 0h12L6 6z" />
        </svg>
        <svg className="absolute -top-[7px] right-[164px]" width="54" height="9" viewBox="0 0 54 9" fill="none">
          <circle cx="27" cy="-20" r="26" fill="#fff" stroke="#7ed87a" strokeWidth="4" />
        </svg>
      </div>
      <div className="relative min-h-0 flex-1 overflow-hidden bg-black">
        <SystemDrawing />
        <MarkupToolbar />
        <div className="pointer-events-none absolute right-[89px] bottom-0 w-[200px] whitespace-nowrap text-[#bdbdbd] opacity-65">
          <div className="text-[20px] leading-7">激活 Windows</div>
          <div className="text-[15px] leading-[18px]">转到“设置”以激活 Windows。</div>
        </div>
      </div>
      <div className="flex h-5 shrink-0 border-b border-black">
        <LayoutTab label="模型" active />
        <LayoutTab label="布局1" />
        <LayoutTab label="布局2" />
      </div>
      <footer className="flex h-[30px] shrink-0 items-center bg-linear-to-b from-[#efefed] to-[#ebe5e0] pt-px whitespace-nowrap text-black">
        <span className="flex h-6 w-[145px] items-center border-r border-[#d0d0d0] pl-[5px] font-['Liberation_Mono',monospace] text-[10px]">
          x = 279719 y = -1074291
        </span>
        <span className="h-6 w-[47px] border-r border-[#d0d0d0]" />
        <span className="flex h-6 items-center pl-1">模型中的标注比例:1</span>
        <div className="ml-auto flex h-6 pr-2 *:flex *:w-[34px] *:items-center *:justify-center *:border-l *:border-[#d0d0d0]">
          <button aria-label="PDF">
            <svg width="15" height="16" viewBox="0 0 15 16" fill="none" stroke="#c99a2e" strokeWidth="1.200">
              <path d="M4 1h10v14H1V4zM4 1v3H1M4 11V7h2v2H4M8 7v4q2 0 2-2t-2-2M12 11V7h2M9 13h5" />
            </svg>
          </button>
          <button>
            <span className="flex h-[17px] w-[17px] items-center justify-center rounded-xs bg-[#1296db] text-[8px] font-bold text-white">
              P·D
            </span>
          </button>
          <button aria-label="最小化" className="border-r">
            <svg width="14" height="14" viewBox="0 0 14 14" fill="none" stroke="#3a9fd8" strokeWidth="1.500">
              <path d="M1 1h12v12H1zM4 10h6" />
            </svg>
          </button>
        </div>
      </footer>
    </div>
  );
}

export default function App() {
  return (
    <div className="flex h-screen flex-col overflow-hidden bg-[#1c1c1c] font-['Noto_Sans','Noto_Sans_CJK_SC',sans-serif] text-[12px] text-[#26292e]">
      <div className="grid min-h-0 flex-1 grid-cols-[1242fr_637fr] grid-rows-1">
        <ModelWindow />
        <ViewerWindow />
      </div>
      <div className="h-[2px] shrink-0 bg-[#1c1c1c]" />
    </div>
  );
}
